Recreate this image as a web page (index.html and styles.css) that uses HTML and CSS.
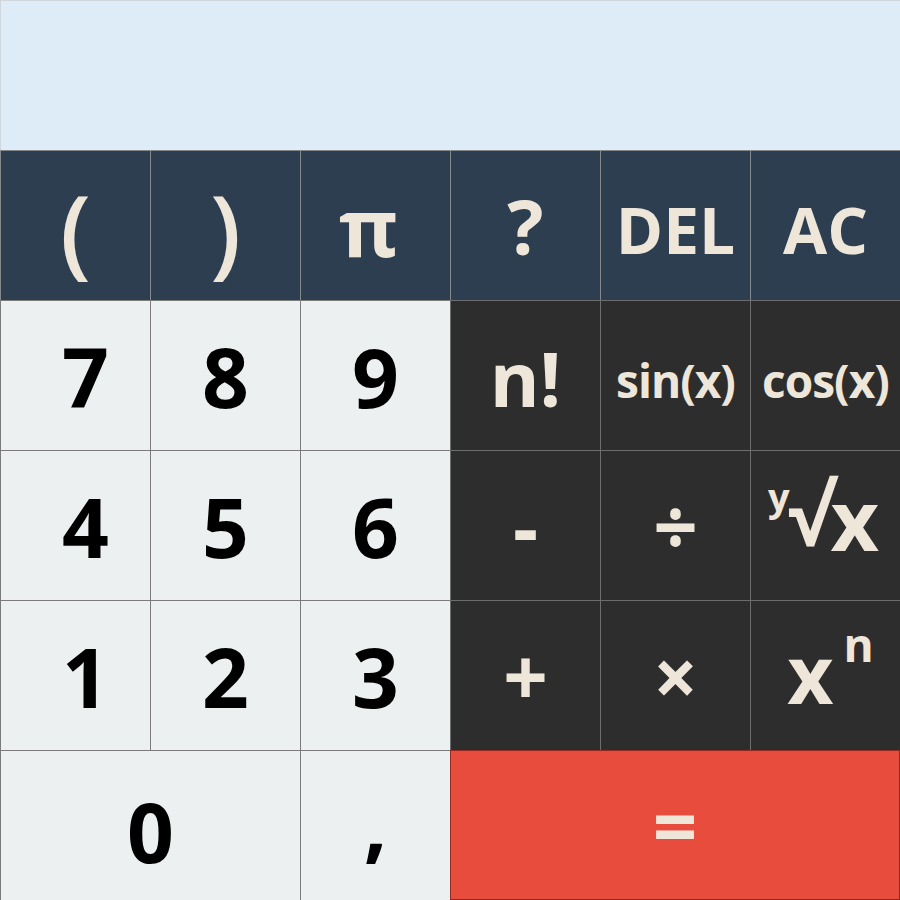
FILE: index.html
```html
<!DOCTYPE html>
<html>
<head>
<meta charset="utf-8">
<link rel="stylesheet" href="styles.css">
</head>
<body>
<div class="calc">
  <div class="display"></div>
  <div class="keys">
    <div class="key top paren">(</div>
    <div class="key top paren">)</div>
    <div class="key top pi">π</div>
    <div class="key top quest">?</div>
    <div class="key top">DEL</div>
    <div class="key top">AC</div>

    <div class="key num first">7</div>
    <div class="key num">8</div>
    <div class="key num">9</div>
    <div class="key op fact">n!</div>
    <div class="key op fn">sin(x)</div>
    <div class="key op fn">cos(x)</div>

    <div class="key num first">4</div>
    <div class="key num">5</div>
    <div class="key num">6</div>
    <div class="key op sym">-</div>
    <div class="key op sym">÷</div>
    <div class="key op root"><span class="rsup">y</span><span class="rsign">√</span><span class="rx">x</span></div>

    <div class="key num first">1</div>
    <div class="key num">2</div>
    <div class="key num">3</div>
    <div class="key op sym">+</div>
    <div class="key op sym">×</div>
    <div class="key op pow"><span class="px">x</span><span class="pn">n</span></div>

    <div class="key num zero">0</div>
    <div class="key num comma">,</div>
    <div class="key eq">=</div>
  </div>
</div>
</body>
</html>
```

FILE: styles.css
```css
html, body {
  margin: 0;
  padding: 0;
  background: #ffffff;
}
.calc {
  width: 900px;
  height: 900px;
  overflow: hidden;
  font-family: "Open Sans", "Noto Sans", sans-serif;
  font-weight: 700;
}
.display {
  box-sizing: border-box;
  height: 150px;
  background: #deecf8;
  border-top: 1px solid #cfd6dc;
  border-left: 1px solid #cfd6dc;
}
.keys {
  display: grid;
  grid-template-columns: repeat(6, 150px);
  grid-auto-rows: 150px;
}
.key {
  box-sizing: border-box;
  display: flex;
  align-items: center;
  justify-content: center;
  border-left: 1px solid #7b7b7b;
  border-top: 1px solid #7b7b7b;
  line-height: 1;
  white-space: nowrap;
  overflow: hidden;
}
.top {
  background: #2c3e50;
  color: #efe6da;
  font-size: 64px;
  border-color: #86898c;
  padding-top: 8px;
}
.paren {
  font-weight: 600;
  font-size: 98px;
  padding-top: 4px;
}
.quest {
  font-size: 76px;
  padding-top: 0;
}
.pi {
  font-size: 80px;
  padding-right: 14px;
  padding-top: 0;
}
.num {
  background: #ecf0f1;
  color: #000000;
  font-size: 82px;
}
.first {
  padding-left: 20px;
}
.zero {
  grid-column: span 2;
  padding-top: 10px;
}
.comma {
  padding-bottom: 10px;
}
.op {
  background: #2d2d2d;
  color: #efe6da;
  border-color: #6e6e6e;
  font-size: 72px;
}
.fact {
  font-size: 76px;
  padding-top: 4px;
}
.fn {
  font-size: 46px;
  letter-spacing: -1px;
  padding-top: 8px;
}
.sym {
  font-size: 78px;
}
.root {
  align-items: flex-start;
  padding-top: 22px;
  padding-right: 4px;
}
.rsup {
  font-size: 38px;
  margin-top: 4px;
}
.rsign {
  font-size: 82px;
  margin-left: -2px;
}
.rx {
  font-size: 84px;
  margin-left: -2px;
  margin-top: 4px;
}
.pow {
  align-items: flex-start;
  padding-top: 20px;
  padding-left: 10px;
}
.px {
  font-size: 80px;
  margin-top: 12px;
}
.pn {
  font-size: 46px;
  margin-left: 10px;
}
.eq {
  grid-column: span 3;
  background: #e74c3c;
  color: #efe6da;
  border: 1px solid #8e2a20;
  font-size: 78px;
}
```
